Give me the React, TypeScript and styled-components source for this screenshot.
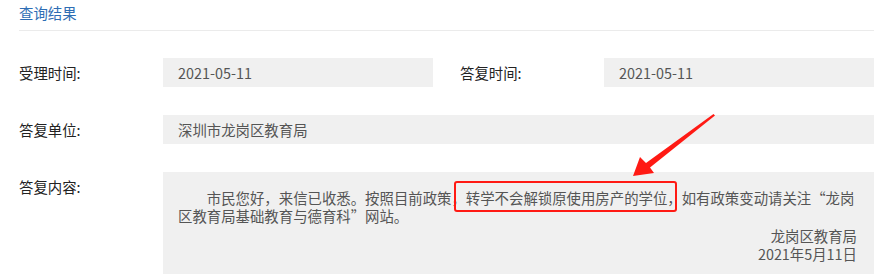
import React from "react";
import styled, { createGlobalStyle } from "styled-components";

const GlobalStyle = createGlobalStyle`
  html, body {
    margin: 0;
    padding: 0;
    background: #ffffff;
  }
  body {
    font-family: "Noto Sans CJK SC", "Microsoft YaHei", sans-serif;
  }
`;

const Page = styled.div`
  position: relative;
  width: 885px;
  height: 274px;
  overflow: hidden;
  padding: 0 11px 0 19px;
  box-sizing: border-box;
  font-size: 14.4px;
`;

const Title = styled.div`
  height: 30px;
  line-height: 26px;
  color: #2e6db4;
  border-bottom: 1px solid #ebebeb;
`;

const Form = styled.div`
  display: flex;
  flex-direction: column;
  gap: 28px;
  padding-top: 27px;
`;

const Row = styled.div`
  display: grid;
  grid-template-columns: ${({ $cols }: { $cols: string }) => $cols};
  align-items: start;
`;

const Label = styled.div<{ $indent?: number }>`
  line-height: 29px;
  color: #222;
  padding-left: ${({ $indent }) => $indent || 0}px;
`;

const Value = styled.div`
  height: 29px;
  line-height: 29px;
  background: #f0f0f0;
  color: #555;
  padding-left: 15px;
`;

const Content = styled.div`
  background: #f0f0f0;
  color: #555;
  padding: 17px 16px 12px 15px;
  line-height: 18px;
  min-height: 120px;
`;

const Para = styled.p`
  margin: 0;
  text-indent: 2em;
`;

const Sign = styled.div`
  margin-top: 2px;
  text-align: right;
  padding-right: 1px;
`;

const Highlight = styled.div`
  position: absolute;
  left: 454px;
  top: 181px;
  width: 223px;
  height: 31px;
  box-sizing: border-box;
  border: 2px solid #ff1a14;
  border-radius: 3px;
`;

const Arrow = styled.svg`
  position: absolute;
  left: 0;
  top: 0;
  pointer-events: none;
`;

export default function App() {
  return (
    <>
      <GlobalStyle />
      <Page>
        <Title>查询结果</Title>
        <Form>
          <Row $cols="144px 270px 171px 270px">
            <Label>受理时间:</Label>
            <Value>2021-05-11</Value>
            <Label $indent={27}>答复时间:</Label>
            <Value>2021-05-11</Value>
          </Row>
          <Row $cols="144px 1fr">
            <Label>答复单位:</Label>
            <Value>深圳市龙岗区教育局</Value>
          </Row>
          <Row $cols="144px 1fr">
            <Label>答复内容:</Label>
            <Content>
              <Para>
                市民您好，来信已收悉。按照目前政策，转学不会解锁原使用房产的学位，如有政策变动请关注“龙岗区教育局基础教育与德育科”网站。
              </Para>
              <Sign>
                龙岗区教育局
                <br />
                2021年5月11日
              </Sign>
            </Content>
          </Row>
        </Form>
        <Highlight />
        <Arrow width="885" height="274" viewBox="0 0 885 274">
          <polygon
            points="633,176 640,157 646,163 713.5,114 715,115.5 650,167.5 654,173"
            fill="#ff1a14"
          />
        </Arrow>
      </Page>
    </>
  );
}
